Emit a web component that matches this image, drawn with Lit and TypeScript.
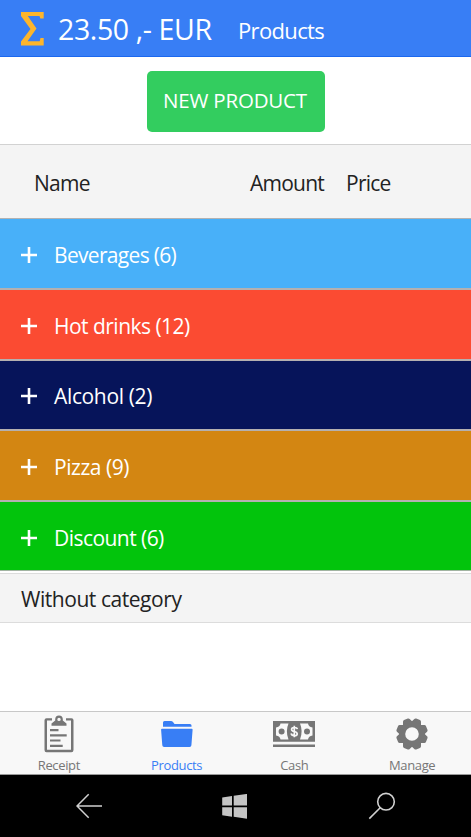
import { LitElement, html, css, svg } from "lit";
import { customElement, property } from "lit/decorators.js";

const receiptIcon = html`<svg width="30" height="38" viewBox="44 715 30 38" fill="#767676">
  <path d="M52 718.2H46.5q-2 0-2 2V750q0 2.200 2 2.200H71.400q2.100 0 2.100-2.200V720.200q0-2-2-2H66v2.300H71V749.800H47V720.500H52Z"/>
  <path fill-rule="evenodd" d="M51.500 725.700V723.500L55.200 720.500V719.200a3.800 3.800 0 0 1 7.600 0v1.300L66.500 723.500v2.200ZM59 717.700a1.700 1.700 0 1 0 0 3.400a1.700 1.700 0 0 0 0-3.400Z"/>
  <path d="M50 729h8.500v2.200H50ZM50 734.200h16.700v2.200H50ZM50 739.400h10.500v2.200H50ZM50 744.700h12.700v2.200H50Z"/>
</svg>`;

const folderIcon = html`<svg width="32" height="28" viewBox="161 720 32 28" fill="#387ef5">
  <path d="M163 726.700V722.500q0-1.500 1.500-1.500H171q1.200 0 2 1l1.500 2H190q1.500 0 1.500 1.500V726.700Z"/>
  <path d="M162 728.700H191.700q1 0 .9 1L191.400 745.300q-.1 1.700-1.800 1.700H164.100q-1.700 0-1.800-1.700L161.100 729.700q-.1-1 .9-1Z"/>
</svg>`;

const cashIcon = html`<svg width="42" height="26" viewBox="273 721 42 26">
  <path fill="#767676" d="M273 721H315V741.700H273ZM273 744.500H315V747H273Z"/>
  <path fill="#f8f8f8" fill-rule="evenodd" d="M280.500 723.500H288.500Q285.200 731.400 288.500 739.500H280.500Q280 736.200 276 735.500V727.500Q280 726.800 280.500 723.500ZM281.600 728.500a3 3 0 1 0 0 6a3 3 0 0 0 0-6Z"/>
  <path fill="#f8f8f8" fill-rule="evenodd" d="M308 723.500H300Q303.300 731.400 300 739.500H308Q308.500 736.200 312.500 735.500V727.500Q308.500 726.800 308 723.500ZM307 728.500a3 3 0 1 0 0 6a3 3 0 0 0 0-6Z"/>
  <path fill="none" stroke="#f8f8f8" stroke-width="1.700" d="M297.300 729.200Q297 727.500 294.300 727.500T291.600 729.500Q291.600 731 294.300 731.500T297.200 733.900Q297.200 735.600 294.300 735.600T291.200 733.400M294.300 725.700V737.300"/>
</svg>`;

const teeth = [0, 1, 2, 3, 4, 5, 6, 7].map(
  (i) => svg`<path transform="rotate(${i * 45 + 22.5})" d="M-5.200-11L-3.600-14.800Q-3.200-15.900-2-15.900H2Q3.200-15.900 3.600-14.800L5.200-11Z"/>`
);
const gearIcon = html`<svg width="32" height="32" viewBox="-16 -16 32 32" fill="#767676">
  ${teeth}
  <circle r="9.800" fill="none" stroke="#767676" stroke-width="6"/>
</svg>`;

const backIcon = html`<svg width="27" height="26" viewBox="76 793 27 26" fill="none" stroke="#d0d0d0" stroke-width="1.500">
  <path d="M102 806H77.500M88.700 794.200L77 806L88.700 817.800"/>
</svg>`;

const windowsIcon = html`<svg width="25" height="25" viewBox="222 793 25 25" fill="#c4c4c4">
  <path d="M222.200 796.500L232 795V804.600H222.200ZM233.700 794.800L247 792.900V804.600H233.700ZM222.200 806.200H232V815.700L222.200 814.200ZM233.700 806.200H247V817.700L233.700 815.800Z"/>
</svg>`;

const searchIcon = html`<svg width="28" height="28" viewBox="368 792 28 28" fill="none" stroke="#d0d0d0" stroke-width="1.600">
  <circle cx="386" cy="801.700" r="8.300"/>
  <path d="M380.200 807.700L369.300 818.600"/>
</svg>`;

@customElement("category-row")
class CategoryRow extends LitElement {
  @property() label = "";
  static styles = css`
    :host {
      display: flex;
      align-items: center;
      box-sizing: border-box;
      padding: 2px 0 0 21px;
      gap: 17px;
      color: #fff;
      border-bottom: 2px solid #b4b0b0;
    }
    svg { flex: none; }
    span { white-space: nowrap; }
  `;
  render() {
    return html`<svg width="16" height="16" viewBox="0 0 16 16" fill="#fff">
        <path d="M0 6.800H6.700V0H9.300V6.800H16V9.200H9.300V16H6.700V9.200H0Z"/></svg>
      <span>${this.label}</span>`;
  }
}

@customElement("app-root")
class AppRoot extends LitElement {
  static styles = css`
    :host {
      display: flex;
      flex-direction: column;
      height: 837px;
      width: 471px;
      overflow: hidden;
      background: #fff;
      color: #222;
      font: 21px/28px "Open Sans", "Noto Sans", sans-serif;
      letter-spacing: -0.5px;
      white-space: nowrap;
    }
    * { box-sizing: border-box; }
    svg { display: block; }
    .top {
      height: 57px;
      flex: none;
      display: flex;
      align-items: center;
      padding: 2px 0 0 21px;
      background: #387ef5;
      border-bottom: 1px solid #1c68ee;
      color: #fff;
    }
    .total { margin-left: 14px; width: 180px; font-size: 28.5px; letter-spacing: -0.38px; }
    .title { font-size: 22px; letter-spacing: -0.65px; padding-top: 1px; }
    .action { height: 87px; flex: none; display: flex; justify-content: center; padding-top: 14px; }
    button {
      width: 178px;
      height: 61px;
      margin: 0;
      padding: 0 1px 3px 0;
      border: 0;
      border-radius: 5px;
      background: #33cd5f;
      color: #fff;
      font: inherit;
      font-size: 20.5px;
      letter-spacing: -0.2px;
    }
    .columns {
      height: 75px;
      flex: none;
      display: grid;
      grid-template-columns: 216px 96px 1fr;
      align-items: center;
      padding: 3px 0 0 34px;
      background: #f4f4f4;
      border-top: 1px solid #d2d2d2;
      border-bottom: 1px solid #b2b2b2;
      letter-spacing: -0.75px;
    }
    .rows { display: grid; grid-template-rows: 71px 71px 70px 71px 69px; flex: none; }
    .beverages { background: #48b0f9; letter-spacing: -0.68px; }
    .hot { background: #fb4b32; letter-spacing: -0.52px; }
    .alcohol { background: #06145a; letter-spacing: -0.35px; }
    .pizza { background: #d38612; letter-spacing: -0.45px; }
    .discount { background: #02c40c; padding-top: 3px; border-bottom: 1px solid #a2b4a2; letter-spacing: -0.55px; }
    .loose {
      margin-top: 2px;
      height: 50px;
      flex: none;
      display: flex;
      align-items: center;
      padding: 2px 0 0 21px;
      background: #f4f4f4;
      border: solid #dcdcdc;
      border-width: 1px 0;
      letter-spacing: -0.45px;
    }
    .space { flex: 1; }
    .tabs {
      height: 64px;
      flex: none;
      display: grid;
      grid-template-columns: repeat(4, 1fr);
      background: #f8f8f8;
      border-top: 1px solid #c8c8c8;
      border-bottom: 1px solid #999;
    }
    .tab {
      display: flex;
      flex-direction: column;
      align-items: center;
      color: #767676;
      font-size: 13px;
      line-height: 18px;
      letter-spacing: -0.35px;
    }
    .active { color: #387ef5; }
    .glyph { height: 44px; display: flex; align-items: center; }
    .system {
      height: 62px;
      flex: none;
      display: grid;
      grid-template-columns: 179px 111px 184px;
      justify-items: center;
      align-items: center;
      background: #000;
    }
  `;
  render() {
    const rows = [
      ["beverages", "Beverages (6)"],
      ["hot", "Hot drinks (12)"],
      ["alcohol", "Alcohol (2)"],
      ["pizza", "Pizza (9)"],
      ["discount", "Discount (6)"],
    ];
    const tabs = [
      ["Receipt", receiptIcon],
      ["Products", folderIcon],
      ["Cash", cashIcon],
      ["Manage", gearIcon],
    ] as const;
    return html`
      <header class="top">
        <svg width="23" height="34" viewBox="0 0 23 34" fill="#fdb52c">
          <path d="M0 0H22.700V6.500H19.300L18.500 4H6.800L15.500 16.500L6.500 29.300H18.700L19.500 26H22.700V33.500H0V29.500L9.500 17L0 4Z"/>
        </svg>
        <span class="total">23.50 ,- EUR</span>
        <span class="title">Products</span>
      </header>
      <div class="action"><button>NEW PRODUCT</button></div>
      <div class="columns"><span>Name</span><span>Amount</span><span>Price</span></div>
      <div class="rows">
        ${rows.map(([c, l]) => html`<category-row class=${c} .label=${l}></category-row>`)}
      </div>
      <div class="loose">Without category</div>
      <div class="space"></div>
      <nav class="tabs">
        ${tabs.map(([l, i]) => html`<div class="tab ${l === "Products" ? "active" : ""}"><div class="glyph">${i}</div>${l}</div>`)}
      </nav>
      <footer class="system">
        <div>${backIcon}</div><div>${windowsIcon}</div><div>${searchIcon}</div>
      </footer>`;
  }
}
